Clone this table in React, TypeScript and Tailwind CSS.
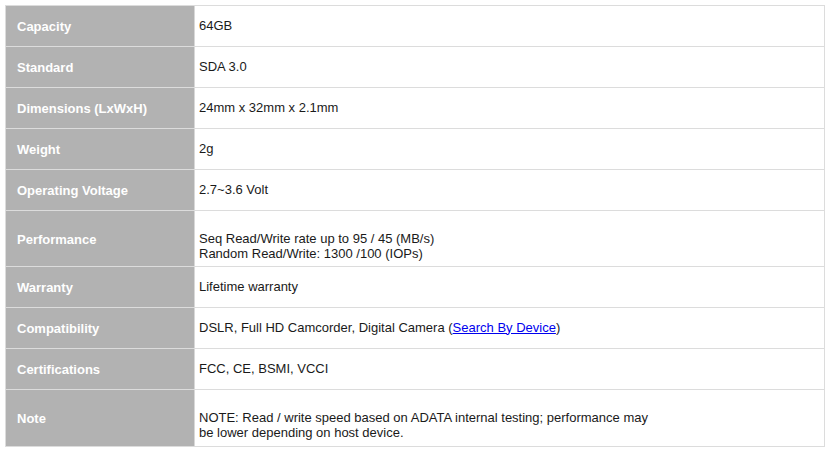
import React from "react";

type Row = { label: string; value: React.ReactNode; tall?: boolean };

const rows: Row[] = [
  { label: "Capacity", value: "64GB" },
  { label: "Standard", value: "SDA 3.0" },
  { label: "Dimensions (LxWxH)", value: "24mm x 32mm x 2.1mm" },
  { label: "Weight", value: "2g" },
  { label: "Operating Voltage", value: "2.7~3.6 Volt" },
  {
    label: "Performance",
    tall: true,
    value: (
      <>
        Seq Read/Write rate up to 95 / 45 (MB/s)
        <br />
        Random Read/Write: 1300 /100 (IOPs)
      </>
    ),
  },
  { label: "Warranty", value: "Lifetime warranty" },
  {
    label: "Compatibility",
    value: (
      <>
        DSLR, Full HD Camcorder, Digital Camera (
        <a href="#" className="text-[#0000ee] underline">
          Search By Device
        </a>
        )
      </>
    ),
  },
  { label: "Certifications", value: "FCC, CE, BSMI, VCCI" },
  {
    label: "Note",
    tall: true,
    value: (
      <>
        NOTE: Read / write speed based on ADATA internal testing; performance may
        <br />
        be lower depending on host device.
      </>
    ),
  },
];

export default function App() {
  return (
    <div
      className="w-[830px] h-[450px] bg-white pt-[5px] pl-[5px]"
      style={{ fontFamily: '"Liberation Sans", Arial, sans-serif' }}
    >
      <div className="w-[820px] border border-[#dcdcdc] flex flex-col">
        {rows.map((r, i) => (
          <div
            key={r.label}
            className={`flex ${r.tall ? "h-[56px]" : "h-[41px]"} ${
              i < rows.length - 1 ? "border-b border-[#dcdcdc]" : ""
            }`}
          >
            <div className="w-[188px] shrink-0 bg-[#b2b2b2] text-white font-bold text-[13px] flex items-center pl-[11px] pt-[2px]">
              {r.label}
            </div>
            <div className="w-px bg-[#d8d8d8]" />
            <div
              className={`flex-1 text-[13px] leading-[15px] text-[#1a1a1a] pl-[4px] ${
                r.tall ? "pt-[20px]" : "flex items-center pb-[2px]"
              }`}
            >
              <div>{r.value}</div>
            </div>
          </div>
        ))}
      </div>
    </div>
  );
}
